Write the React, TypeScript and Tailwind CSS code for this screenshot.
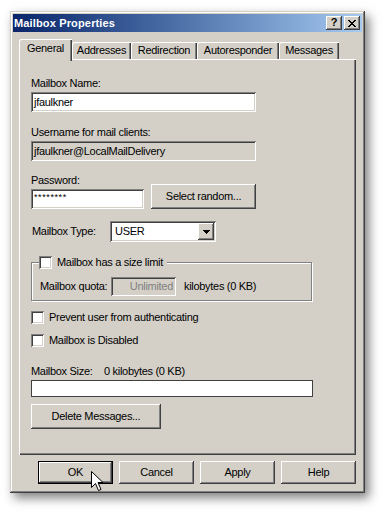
import React from 'react';

// classic 3D bevels, drawn with inset shadows so they take no layout space
const raised =
  'bg-[#d4d0c8] shadow-[inset_-1px_-1px_#404040,inset_1px_1px_#ffffff,inset_-2px_-2px_#808080,inset_2px_2px_#d4d0c8]';
const sunken =
  'shadow-[inset_1px_1px_#808080,inset_-1px_-1px_#ffffff,inset_2px_2px_#404040,inset_-2px_-2px_#d4d0c8]';

const TABS = [
  { label: 'Addresses', w: 'w-[59px]' },
  { label: 'Redirection', w: 'w-[66px]' },
  { label: 'Autoresponder', w: 'w-[82px]' },
  { label: 'Messages', w: 'w-[60px]' },
];

function Checkbox() {
  return <div className={`h-[13px] w-[13px] shrink-0 bg-white ${sunken}`} />;
}

function Btn({ label, className = '' }: { label: string; className?: string }) {
  return <div className={`flex items-center justify-center ${raised} ${className}`}>{label}</div>;
}

export default function App() {
  return (
    <div className="relative h-[512px] w-[383px] overflow-hidden bg-white pl-[10px] pt-[11px] font-['Liberation_Sans',Arial,sans-serif] text-[11px] leading-[13px] tracking-[-0.3px] text-black">
      {/* window */}
      <div className="flex h-[482px] w-[355px] flex-col bg-[#d4d0c8] p-[3px] shadow-[inset_-1px_-1px_#404040,inset_1px_1px_#d4d0c8,inset_-2px_-2px_#808080,inset_2px_2px_#ffffff,4px_5px_10px_rgba(0,0,0,0.5)]">
        {/* title bar */}
        <div className="flex h-[18px] shrink-0 items-center justify-between bg-linear-to-r from-[#0a246a] to-[#a6caf0] pl-[1px] pr-[2px]">
          <span className="text-[11px] font-bold tracking-[0.15px] text-white">Mailbox Properties</span>
          <div className="flex gap-[2px]">
            <div className={`flex h-[14px] w-[16px] items-center justify-center pb-[1px] text-[11px] font-bold leading-none tracking-normal ${raised}`}>?</div>
            <div className={`flex h-[14px] w-[16px] items-center justify-center ${raised}`}>
              <svg width="8" height="7" viewBox="0 0 8 7" shapeRendering="crispEdges">
                <path d="M0 0h2v1h-2zM6 0h2v1h-2zM1 1h2v1h-2zM5 1h2v1h-2zM2 2h4v1h-4zM3 3h2v1h-2zM2 4h4v1h-4zM1 5h2v1h-2zM5 5h2v1h-2zM0 6h2v1h-2zM6 6h2v1h-2z" fill="#000" />
              </svg>
            </div>
          </div>
        </div>

        <div className="flex flex-col px-[6px] pt-[7px]">
          {/* tabs */}
          <div className="flex h-[20px] items-end">
            <div className="relative z-10 -mb-[2px] flex h-[22px] w-[53px] justify-center rounded-tl-[2px] bg-[#d4d0c8] pt-[3px] shadow-[inset_1px_1px_#ffffff,inset_-1px_0_#404040,inset_-2px_0_#808080]">
              General
            </div>
            {TABS.map(t => (
              <div
                key={t.label}
                className={`flex h-[17px] ${t.w} items-center justify-center rounded-tl-[2px] shadow-[inset_1px_1px_#ffffff,inset_-1px_0_#404040,inset_-2px_0_#808080]`}
              >
                {t.label}
              </div>
            ))}
          </div>

          {/* tab panel */}
          <div className="flex h-[396px] w-[337px] flex-col px-[12px] pt-[18px] shadow-[inset_1px_1px_#ffffff,inset_-1px_-1px_#404040,inset_-2px_-2px_#808080]">
            <div>Mailbox Name:</div>
            <div className={`mt-[2px] flex h-[20px] w-[225px] items-center bg-white pl-[3px] ${sunken}`}>jfaulkner</div>

            <div className="mt-[14px]">Username for mail clients:</div>
            <div className={`mt-[2px] flex h-[20px] w-[225px] items-center bg-[#d4d0c8] pl-[3px] ${sunken}`}>
              jfaulkner@LocalMailDelivery
            </div>

            <div className="mt-[13px] flex items-end">
              <div className="flex flex-col">
                <div>Password:</div>
                <div className={`mt-[2px] flex h-[20px] w-[113px] items-start bg-white pl-[3px] pt-[4px] text-[9px] leading-[9px] tracking-[0.6px] ${sunken}`}>
                  ********
                </div>
              </div>
              <Btn label="Select random..." className="ml-[7px] h-[25px] w-[105px]" />
            </div>

            <div className="mt-[12px] flex h-[21px] items-center">
              <div className="w-[79px] pl-[1px]">Mailbox Type:</div>
              <div className={`flex h-[21px] w-[106px] items-center justify-between bg-white p-[2px] ${sunken}`}>
                <span className="pl-[3px]">USER</span>
                <div className={`flex h-[17px] w-[16px] items-center justify-center ${raised}`}>
                  <svg width="7" height="4" viewBox="0 0 7 4" shapeRendering="crispEdges">
                    <path d="M0 0h7v1h-7zM1 1h5v1h-5zM2 2h3v1h-3zM3 3h1v1h-1z" fill="#000" />
                  </svg>
                </div>
              </div>
            </div>

            {/* size limit group */}
            <div className="mt-[20px] flex w-[281px] flex-col border border-[#808080] pb-[4px] shadow-[inset_1px_1px_#ffffff,1px_1px_#ffffff]">
              <div className="-mt-[7px] ml-[7px] flex h-[13px] w-fit items-center gap-[5px] bg-[#d4d0c8] pr-[4px]">
                <Checkbox />
                <span>Mailbox has a size limit</span>
              </div>
              <div className="mt-[8px] flex h-[19px] items-center pl-[8px]">
                <div className="w-[71px]">Mailbox quota:</div>
                <div className={`flex h-[19px] w-[65px] items-center justify-end bg-[#d4d0c8] pr-[3px] text-[#808080] ${sunken}`}>
                  Unlimited
                </div>
                <div className="ml-[8px]">kilobytes (0 KB)</div>
              </div>
            </div>

            <div className="mt-[10px] flex h-[13px] items-center gap-[5px]">
              <Checkbox />
              <span>Prevent user from authenticating</span>
            </div>
            <div className="mt-[10px] flex h-[13px] items-center gap-[5px]">
              <Checkbox />
              <span>Mailbox is Disabled</span>
            </div>

            <div className="mt-[18px] flex">
              <div className="w-[73px]">Mailbox Size:</div>
              <div>0 kilobytes (0 KB)</div>
            </div>
            <div className="mt-[2px] h-[17px] w-[282px] border border-[#404040] bg-white" />

            <Btn label="Delete Messages..." className="mt-[7px] h-[25px] w-[130px]" />
          </div>

          {/* dialog buttons */}
          <div className="mt-[6px] flex w-[337px] justify-end gap-[6px]">
            <div className="flex h-[23px] w-[75px] items-center justify-center bg-[#d4d0c8] shadow-[inset_0_0_0_1px_#000000,inset_-2px_-2px_#404040,inset_2px_2px_#ffffff,inset_-3px_-3px_#808080]">
              OK
            </div>
            <Btn label="Cancel" className="h-[23px] w-[75px]" />
            <Btn label="Apply" className="h-[23px] w-[75px]" />
            <Btn label="Help" className="h-[23px] w-[75px]" />
          </div>
        </div>
      </div>

      {/* mouse pointer over OK */}
      <svg className="absolute left-[91px] top-[471px]" width="13" height="21" viewBox="0 0 13 21">
        <path d="M0.5 0.5 L0.5 16.5 L4.5 12.5 L7.5 19.5 L10 18.5 L7 11.5 L12 11.5 Z" fill="#fff" stroke="#000" strokeWidth="1" />
      </svg>
    </div>
  );
}
